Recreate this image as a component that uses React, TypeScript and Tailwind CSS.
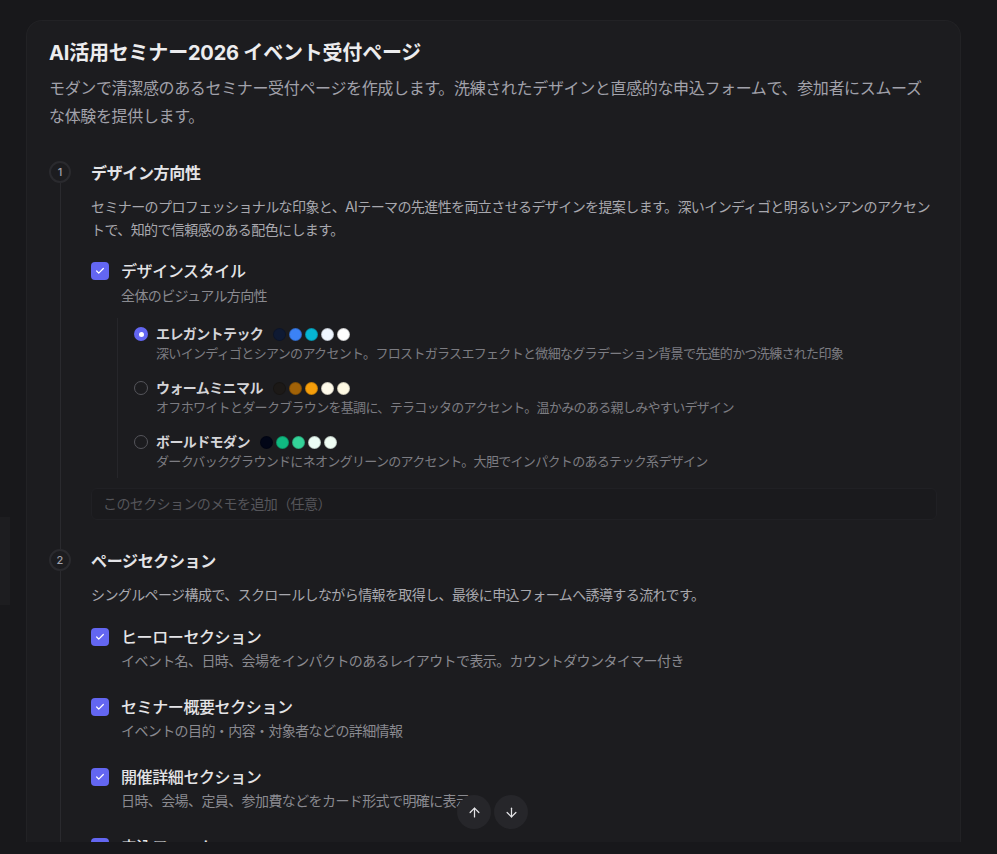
import React from "react";
import { ArrowUp, ArrowDown } from "lucide-react";

const CheckBox = () => (
  <div className="mt-[3px] flex h-[18px] w-[18px] shrink-0 items-center justify-center rounded-[4px] bg-[#6366f1]">
    <svg width="10" height="10" viewBox="0 0 24 24" fill="none" stroke="white" strokeWidth="3" strokeLinecap="round" strokeLinejoin="round">
      <path d="M20 6 9 17l-5-5" />
    </svg>
  </div>
);

type Opt = { label: string; desc: string; colors: string[]; selected?: boolean };

const options: Opt[] = [
  {
    label: "エレガントテック",
    desc: "深いインディゴとシアンのアクセント。フロストガラスエフェクトと微細なグラデーション背景で先進的かつ洗練された印象",
    colors: ["#0f1a33", "#3b82f6", "#06b6d4", "#eff6ff", "#ffffff"],
    selected: true,
  },
  {
    label: "ウォームミニマル",
    desc: "オフホワイトとダークブラウンを基調に、テラコッタのアクセント。温かみのある親しみやすいデザイン",
    colors: ["#1c1917", "#a16207", "#f59e0b", "#fffbeb", "#fef9e3"],
  },
  {
    label: "ボールドモダン",
    desc: "ダークバックグラウンドにネオングリーンのアクセント。大胆でインパクトのあるテック系デザイン",
    colors: ["#020617", "#10b981", "#34d399", "#ecfdf5", "#f0fdf4"],
  },
];

const sections = [
  { title: "ヒーローセクション", desc: "イベント名、日時、会場をインパクトのあるレイアウトで表示。カウントダウンタイマー付き" },
  { title: "セミナー概要セクション", desc: "イベントの目的・内容・対象者などの詳細情報" },
  { title: "開催詳細セクション", desc: "日時、会場、定員、参加費などをカード形式で明確に表示" },
  { title: "申込フォーム", desc: "氏名、メールアドレス、所属などの入力フォーム" },
];

const StepMarker = ({ n }: { n: number }) => (
  <div className="flex w-[22px] shrink-0 flex-col items-center">
    <div className="flex h-[22px] w-[22px] items-center justify-center rounded-full border-2 border-[#2a2a2e] text-[11px] font-medium text-[#a1a1aa]">
      {n}
    </div>
    <div className="w-px flex-1 bg-[#2a2a2e]" />
  </div>
);

export default function App() {
  return (
    <div
      className="relative h-[854px] w-full overflow-hidden bg-[#18181b]"
      style={{ fontFamily: "Inter, 'Noto Sans CJK JP', sans-serif" }}
    >
      <div className="absolute left-0 top-[517px] h-[88px] w-[10px] bg-[#1d1d20]" />
      <div className="ml-[26px] mt-5 h-[822px] w-[935px] overflow-hidden rounded-t-2xl border border-b-0 border-[#222225] bg-[#1c1c1f] pl-[22px] pr-[23px] pt-[18px]">
        <h1 className="text-[20px] font-bold leading-[28px] tracking-[-0.2px] text-[#ececee]">AI活用セミナー2026 イベント受付ページ</h1>
        <p className="mt-[7px] text-base leading-[28px] tracking-[-0.35px] text-[#a1a1aa]">
          モダンで清潔感のあるセミナー受付ページを作成します。洗練されたデザインと直感的な申込フォームで、参加者にスムーズな体験を提供します。
        </p>

        {/* Step 1 */}
        <div className="mt-[31px] flex gap-5">
          <StepMarker n={1} />
          <div className="flex-1 pb-[29px]">
            <div className="text-base font-bold leading-6 tracking-[-0.35px] text-[#e4e4e7]">デザイン方向性</div>
            <p className="mt-[10px] text-sm leading-[23px] tracking-[-0.6px] text-[#a8a8ae]">
              セミナーのプロフェッショナルな印象と、AIテーマの先進性を両立させるデザインを提案します。深いインディゴと明るいシアンのアクセントで、知的で信頼感のある配色にします。
            </p>
            <div className="mt-[18px] flex gap-3">
              <CheckBox />
              <div>
                <div className="text-base font-medium leading-6 tracking-[-0.4px] text-[#e4e4e7]">デザインスタイル</div>
                <div className="mt-[3px] text-sm leading-5 tracking-[-0.6px] text-[#8a8a90]">全体のビジュアル方向性</div>
              </div>
            </div>
            <div className="ml-[26px] mt-3 flex flex-col gap-4 border-l border-[#26262a] pb-2 pl-4 pt-[6px]">
              {options.map((o) => (
                <div key={o.label} className="flex gap-[8px]">
                  {o.selected ? (
                    <div className="mt-[3px] flex h-[14px] w-[14px] shrink-0 items-center justify-center rounded-full bg-[#6366f1]">
                      <div className="h-[5px] w-[5px] rounded-full bg-white" />
                    </div>
                  ) : (
                    <div className="mt-[3px] h-[14px] w-[14px] shrink-0 rounded-full border border-[#55555b]" />
                  )}
                  <div>
                    <div className="flex items-center gap-[10px]">
                      <span className="text-sm font-semibold leading-5 tracking-[-0.6px] text-[#d4d4d8]">{o.label}</span>
                      <div className="flex gap-[3px]">
                        {o.colors.map((c, i) => (
                          <span key={i} className="h-[13px] w-[13px] rounded-full border border-black/20" style={{ backgroundColor: c }} />
                        ))}
                      </div>
                    </div>
                    <div className="text-[13px] leading-[18px] tracking-[-0.68px] text-[#7c7c82]">{o.desc}</div>
                  </div>
                </div>
              ))}
            </div>
            <div className="mt-[10px] flex h-8 items-center rounded-md border border-[#202024] bg-[#1a1a1d] px-[11px] text-sm tracking-[-0.6px] text-[#55555a]">
              このセクションのメモを追加（任意）
            </div>
          </div>
        </div>

        {/* Step 2 */}
        <div className="flex gap-5">
          <StepMarker n={2} />
          <div className="flex-1 pb-10">
            <div className="text-base font-bold leading-6 tracking-[-0.35px] text-[#e4e4e7]">ページセクション</div>
            <p className="mt-[10px] text-sm leading-[23px] tracking-[-0.6px] text-[#a8a8ae]">
              シングルページ構成で、スクロールしながら情報を取得し、最後に申込フォームへ誘導する流れです。
            </p>
            <div className="mt-[19px] flex flex-col gap-6">
              {sections.map((s) => (
                <div key={s.title} className="flex gap-3">
                  <CheckBox />
                  <div>
                    <div className="text-base font-medium leading-6 tracking-[-0.4px] text-[#e4e4e7]">{s.title}</div>
                    <div className="mt-[2px] text-sm leading-5 tracking-[-0.6px] text-[#8a8a90]">{s.desc}</div>
                  </div>
                </div>
              ))}
            </div>
          </div>
        </div>
      </div>

      <div className="absolute left-[457px] top-[795px] flex gap-[3px]">
        <button className="flex h-[34px] w-[34px] items-center justify-center rounded-full bg-[#26262a] text-[#e4e4e7]">
          <ArrowUp size={15} strokeWidth={2} />
        </button>
        <button className="flex h-[34px] w-[34px] items-center justify-center rounded-full bg-[#26262a] text-[#e4e4e7]">
          <ArrowDown size={15} strokeWidth={2} />
        </button>
      </div>
    </div>
  );
}
